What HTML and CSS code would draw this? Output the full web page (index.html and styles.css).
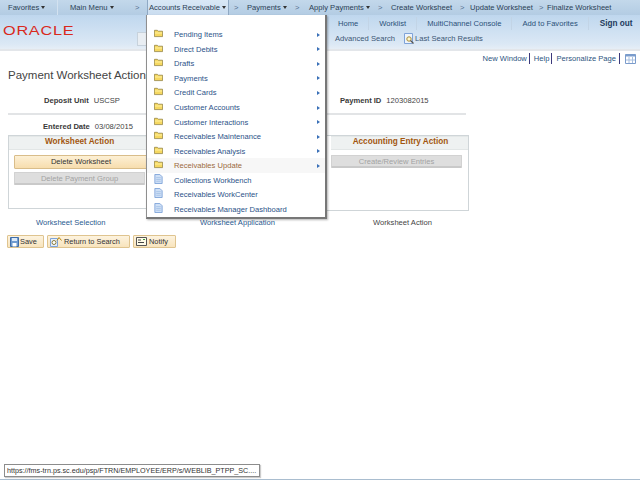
FILE: index.html
```html
<!DOCTYPE html>
<html lang="en">
<head>
<meta charset="utf-8">
<title>Payment Worksheet Actions</title>
<link rel="stylesheet" href="styles.css">
</head>
<body>
<svg class="defs" width="0" height="0" aria-hidden="true">
  <symbol id="folder" viewBox="0 0 10 9">
    <path d="M.5 1.500h3.200l1 1h4.800v6H.5z" fill="#f6d860" stroke="#8a7a3a" stroke-width=".8"/>
    <path d="M1 4h8v1H1z" fill="#fff3a8"/>
  </symbol>
  <symbol id="doc" viewBox="0 0 9 11">
    <path d="M.5.500h5.500l2.500 2.500v7.500H.5z" fill="#cfe0f6" stroke="#7ea3d8"/>
    <path d="M2 4h5M2 6h5M2 8h5" stroke="#9dbbe4" stroke-width=".8"/>
  </symbol>
</svg>

<nav class="topnav">
  <span class="nav-item">Favorites <i class="caret"></i></span>
  <span class="nav-item nav-main">Main Menu <i class="caret"></i></span>
  <span class="chev">&gt;</span>
  <span class="nav-item nav-active">Accounts Receivable <i class="caret"></i></span>
  <span class="chev">&gt;</span>
  <span class="nav-item">Payments <i class="caret"></i></span>
  <span class="chev">&gt;</span>
  <span class="nav-item">Apply Payments <i class="caret"></i></span>
  <span class="chev">&gt;</span>
  <span class="nav-item">Create Worksheet</span>
  <span class="chev">&gt;</span>
  <span class="nav-item">Update Worksheet</span>
  <span class="chev">&gt;</span>
  <span class="nav-item">Finalize Worksheet</span>
</nav>

<header class="banner">
  <div class="logo">ORACLE</div>
  <div class="banner-right">
    <div class="universal">
      <a>Home</a><a>Worklist</a><a>MultiChannel Console</a><a>Add to Favorites</a><a class="signout">Sign out</a>
    </div>
    <div class="search-row">
      <span class="search-input"></span>
      <a class="adv">Advanced Search</a>
      <svg class="lens" width="11" height="11" viewBox="0 0 11 11">
        <path d="M.5.500h8v10h-8z" fill="#eef4fb" stroke="#7ea3d8"/>
        <circle cx="5" cy="6" r="2.200" fill="#fff7c8" stroke="#a58a3a"/>
        <path d="M6.500 7.500l3 3" stroke="#555" stroke-width="1.200"/>
      </svg>
      <a>Last Search Results</a>
    </div>
  </div>
</header>

<div class="pagelinks">
  <a>New Window</a><a>Help</a><a>Personalize Page</a>
  <svg class="gridicon" width="11" height="10" viewBox="0 0 11 10">
    <path d="M.5.500h10v9H.5z" fill="#fff" stroke="#7b9ccc"/>
    <path d="M.5.500h10v2H.5z" fill="#7b9ccc"/>
    <path d="M4 3v6M7.500 3v6M1 6h9" stroke="#a9c0e0"/>
  </svg>
</div>

<main class="content">
  <h1 class="title">Payment Worksheet Actions</h1>
  <div class="info-row">
    <span class="field field-unit"><b>Deposit Unit</b><span>USCSP</span></span>
    <span class="field field-id"><b>Payment ID</b><span>1203082015</span></span>
  </div>
  <div class="rule"></div>
  <div class="field field-date"><b>Entered Date</b><span>03/08/2015</span></div>

  <section class="panels">
    <div class="panel panel-left">
      <h2>Worksheet Action</h2>
      <button class="btn btn-on">Delete Worksheet</button>
      <button class="btn btn-off">Delete Payment Group</button>
    </div>
    <div class="panel panel-mid"></div>
    <div class="panel panel-right">
      <h2>Accounting Entry Action</h2>
      <button class="btn btn-off">Create/Review Entries</button>
    </div>
  </section>

  <div class="tabs">
    <a class="tab-sel">Worksheet Selection</a>
    <a class="tab-app">Worksheet Application</a>
    <span class="tab-act">Worksheet Action</span>
  </div>

  <div class="toolbar">
    <button class="tool tool-save">
      <svg width="9" height="10" viewBox="0 0 9 10"><path d="M.5.500h8v9h-8z" fill="#6f9bd0" stroke="#3f6da8"/><path d="M2 1h5v3H2z" fill="#dbe8f7"/><path d="M2.500 6h4v3.500h-4z" fill="#fff"/></svg>
      Save
    </button>
    <button class="tool tool-return">
      <svg width="12" height="10" viewBox="0 0 12 10"><path d="M.5 1.500h7v8h-7z" fill="#e6effa" stroke="#7ea3d8"/><circle cx="4" cy="5.500" r="2" fill="#fff" stroke="#8a7a3a"/><path d="M7 3.500L9 .5l2.500 3" fill="none" stroke="#b8860b"/></svg>
      Return to Search
    </button>
    <button class="tool tool-notify">
      <svg width="11" height="9" viewBox="0 0 11 9"><path d="M.5.500h10v8H.5z" fill="#fffbe8" stroke="#555"/><path d="M2 3h3M2 5.500h6" stroke="#444"/><path d="M7 2.500h2" stroke="#3a9a3a"/></svg>
      Notify
    </button>
  </div>
</main>

<div class="menu">
  <ul>
    <li><svg class="ic"><use href="#folder"/></svg><a>Pending Items</a><i class="arr"></i></li>
    <li><svg class="ic"><use href="#folder"/></svg><a>Direct Debits</a><i class="arr"></i></li>
    <li><svg class="ic"><use href="#folder"/></svg><a>Drafts</a><i class="arr"></i></li>
    <li><svg class="ic"><use href="#folder"/></svg><a>Payments</a><i class="arr"></i></li>
    <li><svg class="ic"><use href="#folder"/></svg><a>Credit Cards</a><i class="arr"></i></li>
    <li><svg class="ic"><use href="#folder"/></svg><a>Customer Accounts</a><i class="arr"></i></li>
    <li><svg class="ic"><use href="#folder"/></svg><a>Customer Interactions</a><i class="arr"></i></li>
    <li><svg class="ic"><use href="#folder"/></svg><a>Receivables Maintenance</a><i class="arr"></i></li>
    <li><svg class="ic"><use href="#folder"/></svg><a>Receivables Analysis</a><i class="arr"></i></li>
    <li class="hover"><svg class="ic"><use href="#folder"/></svg><a>Receivables Update</a><i class="arr"></i></li>
    <li><svg class="ic"><use href="#doc"/></svg><a>Collections Workbench</a></li>
    <li><svg class="ic"><use href="#doc"/></svg><a>Receivables WorkCenter</a></li>
    <li><svg class="ic"><use href="#doc"/></svg><a>Receivables Manager Dashboard</a></li>
  </ul>
</div>

<div class="status">https://fms-trn.ps.sc.edu/psp/FTRN/EMPLOYEE/ERP/s/WEBLIB_PTPP_SC....</div>
<div class="taskbar"></div>
</body>
</html>
```

FILE: styles.css
```css
* { box-sizing: border-box; }
html, body { margin: 0; padding: 0; }
body {
  width: 640px;
  height: 480px;
  overflow: hidden;
  position: relative;
  background: #fff;
  font: 7.6px/11px "Liberation Sans", Arial, sans-serif;
  color: #333;
}
.defs { position: absolute; }
a { color: #2a4d7f; }

/* top nav */
.topnav {
  height: 15px;
  display: grid;
  grid-template-columns: 57px 73px 17px 82px 18px 43px 19px 64px 18px 64px 15px 64px 13px 93px;
  align-items: center;
  background: linear-gradient(#c3d8eb, #b3cce3);
  color: #2b3f55;
  white-space: nowrap;
}
.nav-item { padding-left: 8px; line-height: 15px; height: 15px; }
.nav-main { padding-left: 12px; border-left: 1px solid #d3e2f0; }
.nav-active {
  padding-left: 1px;
  background: linear-gradient(#d9e8f6, #c9dcef);
  border-left: 1px solid #8fa9c4;
  border-right: 1px solid #8fa9c4;
}
.topnav .nav-item:nth-child(n+6) { padding-left: 0; }
.chev { padding-left: 5px; color: #54708f; }
.caret {
  display: inline-block;
  width: 0; height: 0;
  margin-left: 0;
  vertical-align: 1px;
  border: 2.500px solid transparent;
  border-top: 3px solid #333;
  border-bottom-width: 0;
}

/* banner */
.banner {
  height: 36px;
  display: flex;
  justify-content: space-between;
  background: linear-gradient(#bfd7ee, #dbe8f5 85%, #e6eef6);
  border-bottom: 2px solid #e3e6ea;
}
.logo {
  margin: 9px 0 0 3px;
  font-size: 13px;
  line-height: 14px;
  letter-spacing: .6px;
  color: #d9291c;
  transform: scaleX(1.25);
  transform-origin: left center;
}
.banner-right { width: 503px; }
.universal {
  height: 16px;
  display: flex;
  align-items: center;
  padding-left: 201px;
  line-height: 13px;
  white-space: nowrap;
}
.universal a { color: #2a5078; padding-right: 10px; margin-right: 10px; border-right: 1px solid #c2d4e6; }
.universal .signout { font-weight: 700; font-size: 8.2px; border: 0; padding: 0; margin: 0 0 0 1px; color: #223a5c; }
.search-row { display: flex; align-items: center; height: 15px; white-space: nowrap; }
.search-row a { color: #3b5674; }
.search-input { width: 10px; height: 14px; background: #e9eef3; border: 1px solid #c7d2dc; }
.adv { margin-left: 188px; }
.lens { margin: 0 0 0 9px; }

/* page links */
.pagelinks {
  height: 13px;
  margin-top: 1px;
  display: flex;
  justify-content: flex-end;
  align-items: center;
  padding-right: 4px;
  white-space: nowrap;
}
.pagelinks a { color: #2c5480; padding-right: 2px; margin-right: 4px; border-right: 1px solid #3c3a7c; line-height: 11px; }
.pagelinks a:nth-child(3) { padding-right: 3px; margin-right: 5px; }

/* content */
.content { padding-left: 8px; }
.title { margin: 3px 0 0; font-weight: 400; font-size: 11.5px; line-height: 15px; color: #444; white-space: nowrap; }
.info-row { height: 12px; margin-top: 12px; display: flex; }
.field { color: #444; white-space: nowrap; }
.field b { margin-right: 5px; color: #3a3a3a; }
.field-unit { margin-left: 36px; width: 296px; }
.rule { width: 458px; height: 2px; margin-top: 6px; background: #e2e4e6; }
.field-date { margin: 6px 0 0 35px; height: 12px; }

.panels {
  width: 461px;
  margin-top: 2px;
  display: grid;
  grid-template-columns: 160px 158px 143px;
  align-items: start;
}
.panel { border: 1px solid #cfd5d8; }
.panel-left { height: 74px; border-right: 0; padding: 0 0 0 5px; }
.panel-mid { height: 74px; border-width: 1px 0; }
.panel-right { height: 76px; border-left: 0; padding: 0 5px; }
.panel h2 {
  margin: 0 0 5px -5px;
  height: 14px;
  font-size: 8.2px;
  line-height: 10px;
  font-weight: 700;
  color: #a2560f;
  background: #eef1f1;
  border-bottom: 1px solid #e2e6e6;
  border-top: 1px solid #e4e8e8;
  white-space: nowrap;
}
.panel-left h2 { width: 155px; padding-left: 36px; }
.panel-right h2 { margin-right: -5px; text-align: center; padding-left: 2px; margin-left: 0; }
.btn {
  display: block;
  height: 14px;
  padding: 0;
  font: inherit;
  line-height: 12px;
  border-radius: 1px;
  text-align: center;
  white-space: nowrap;
}
.btn-on {
  width: 160px;
  margin-bottom: 3px;
  padding-right: 26px;
  color: #333;
  background: linear-gradient(#fdf0d5, #f7ddae);
  border: 1px solid #d9bd8a;
}
.btn-off {
  width: 131px;
  height: 13px;
  color: #a3a3a3;
  background: #dedede;
  border: 1px solid #d2d2d2;
  border-bottom: 2px solid #c9c9c9;
}

.tabs { height: 13px; margin-top: 6px; display: grid; grid-template-columns: 164px 173px auto; padding-left: 28px; white-space: nowrap; }
.tabs a { color: #2a5a90; }
.tab-act { color: #444; }

.toolbar { display: flex; gap: 3px; margin: 5px 0 0 -1px; }
.tool {
  height: 13px;
  padding: 0 0 0 2px;
  display: flex;
  align-items: center;
  gap: 2px;
  font-family: inherit;
  font-size: 7.4px;
  color: #333;
  white-space: nowrap;
  background: linear-gradient(#fdf3df, #f8e4bd);
  border: 1px solid #dfc48f;
  border-radius: 1px;
}
.tool-save { width: 37px; gap: 1px; }
.tool-return { width: 83px; }
.tool-notify { width: 43px; }

/* dropdown menu */
.menu {
  position: absolute;
  left: 146px;
  top: 15px;
  width: 181px;
  height: 204px;
  background: #fff;
  border: 1px solid #8f8f8f;
  border-top: 0;
  border-right: 2px solid #777;
  border-bottom: 2px solid #777;
  box-shadow: 1px 1px 2px rgba(0,0,0,.3);
}
.menu ul { list-style: none; margin: 0; padding: 12.5px 0 0 0; }
.menu li { height: 14.55px; display: flex; align-items: center; padding-left: 7px; }
.menu li a { margin-left: 11px; color: #2b5288; white-space: nowrap; }
.ic { width: 9px; height: 10px; flex: none; margin-bottom: 3px; }
.menu .hover { background: #f7f7f7; }
.menu .hover a { color: #9b6a3c; }
.arr {
  margin-left: auto;
  margin-right: 5px;
  width: 0; height: 0;
  border: 2.500px solid transparent;
  border-left: 3px solid #3a70b8;
  border-right-width: 0;
}

/* status bubble */
.status {
  position: absolute;
  left: 4px;
  top: 464px;
  width: 256px;
  height: 13px;
  padding-left: 2px;
  line-height: 11px;
  font-size: 7.2px;
  white-space: nowrap;
  color: #333;
  background: #fff;
  border: 1px solid #8c8c8c;
  box-shadow: 1px 1px 1px rgba(0,0,0,.2);
}
.taskbar { position: absolute; left: 0; right: 0; bottom: 0; height: 1px; background: #a9bdcf; }
```
